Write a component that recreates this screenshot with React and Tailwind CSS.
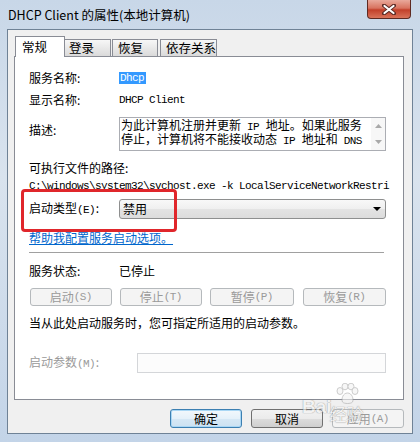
import React from 'react';

const M = ({children, className = ''}) => (
    <span className={`font-['Liberation_Mono',monospace] text-[11px] tracking-[-0.6px] whitespace-pre pr-[0.6px] ${className}`}>{children}</span>
);

const btn = "h-[18px] flex items-center justify-center rounded-[3px] border border-[#b5b9bc] bg-[#f4f4f4] text-[#9a9a9a]";
const push = "w-[72px] h-[19px] flex items-center justify-center rounded-[3px] border";

export default function App() {
    return (
        <div className="w-[420px] h-[442px] overflow-hidden flex flex-col bg-[linear-gradient(180deg,#c8d7e8_0%,#d9e3ee_40%,#c3d4e8_100%)] font-['Noto_Sans_CJK_SC',sans-serif] text-black">
            {/* title bar */}
            <div className="h-[29px] flex items-start shrink-0">
                <div className="pl-[8px] pt-[6px] text-[12.5px] leading-[18px]">DHCP Client 的属性(本地计算机)</div>
                <div className="ml-auto mr-[9px] w-[44px] h-[19px] rounded-b-[4px] border border-t-0 border-[#5e2a22] bg-[linear-gradient(180deg,#e9a99b_0%,#d8735f_45%,#c2402a_55%,#d9735a_100%)] flex items-center justify-center">
                    <svg width="14" height="11" viewBox="0 0 14 11">
                        <path d="M2 1.5 L12 9.5 M12 1.5 L2 9.5" stroke="#5a2a25" strokeWidth="4" strokeLinecap="round" />
                        <path d="M2.5 2 L11.5 9 M11.5 2 L2.5 9" stroke="#ffffff" strokeWidth="2.2" strokeLinecap="round" />
                    </svg>
                </div>
            </div>

            {/* client area */}
            <div className="mx-[7px] h-[405px] border border-[#6f8296] bg-[#f0f0f0] flex flex-col">
                {/* tabs */}
                <div className="flex items-end h-[21px] mt-[6px] ml-[7px] text-[12.5px] leading-[14px]">
                    <div className="relative z-10 w-[50px] h-[21px] bg-white border border-b-0 border-[#898c95] pl-[6px] pt-[3px]">常规</div>
                    <div className="w-[46px] h-[17px] mb-[1px] border border-l-0 border-b-0 border-[#898c95] bg-[linear-gradient(180deg,#f7f7f7,#dadada)] pl-[4px] pt-[1px]">登录</div>
                    <div className="ml-[1px] w-[46px] h-[17px] mb-[1px] border border-b-0 border-[#898c95] bg-[linear-gradient(180deg,#f7f7f7,#dadada)] pl-[5px] pt-[1px]">恢复</div>
                    <div className="ml-[2px] w-[57px] h-[17px] mb-[1px] border border-b-0 border-[#898c95] bg-[linear-gradient(180deg,#f7f7f7,#dadada)] pl-[5px] pt-[1px]">依存关系</div>
                </div>

                {/* panel */}
                <div className="relative -mt-px ml-[6px] w-[390px] h-[344px] border border-[#898c95] bg-white text-[12px] leading-[14px] flex flex-col">
                    <div className="flex items-center h-[14px] mt-[14px] pl-[14px]">
                        <span className="w-[90px]">服务名称:</span>
                        <span className="h-[12px] flex items-center bg-[#3399ff] text-white px-[1px]"><M>Dhcp</M></span>
                    </div>
                    <div className="flex items-center h-[14px] mt-[8px] pl-[14px]">
                        <span className="w-[90px]">显示名称:</span>
                        <M>DHCP Client</M>
                    </div>
                    <div className="flex h-[34px] mt-[10px] pl-[14px]">
                        <span className="w-[90px] pt-[6px]">描述:</span>
                        <div className="w-[267px] h-[34px] border border-[#abadb3] flex">
                            <div className="flex-1 pl-[1px] pt-[1px] leading-[12px] whitespace-nowrap">
                                <div>为此计算机注册并更新<M> IP </M>地址。如果此服务</div>
                                <div>停止，计算机将不能接收动态<M> IP </M>地址和<M> DNS</M></div>
                            </div>
                            <div className="w-[14px] flex flex-col items-center justify-between py-[6px] bg-[#f7f7f7]">
                                <svg width="7" height="4" viewBox="0 0 7 4"><path d="M0 4 L3.5 0 L7 4 Z" fill="#a9a9a9" /></svg>
                                <svg width="7" height="4" viewBox="0 0 7 4"><path d="M0 0 L3.5 4 L7 0 Z" fill="#a9a9a9" /></svg>
                            </div>
                        </div>
                    </div>
                    <div className="h-[14px] mt-[10px] pl-[14px]">可执行文件的路径:</div>
                    <div className="h-[14px] mt-[2px] ml-[14px] whitespace-nowrap">
                        <M>C:\windows\system32\svchost.exe -k LocalServiceNetworkRestri</M>
                    </div>
                    <div className="flex items-center h-[20px] mt-[8px] pl-[14px]">
                        <span className="w-[90px]">启动类型<M>(E)</M>:</span>
                        <div className="w-[267px] h-[20px] rounded-[3px] border border-[#8e8f8f] bg-[linear-gradient(180deg,#f8f8f8_0%,#efefef_50%,#e3e3e3_51%,#dcdcdc_100%)] flex items-center pl-[3px] pr-[4px]">
                            <span>禁用</span>
                            <svg className="ml-auto" width="8" height="4" viewBox="0 0 8 4"><path d="M0 0 L8 0 L4 4 Z" fill="#000" /></svg>
                        </div>
                    </div>
                    <div className="h-[14px] mt-[12px] pl-[14px]">
                        <span className="text-[#0066cc] underline">帮助我配置服务启动选项。</span>
                    </div>
                    <div className="h-px w-[355px] mt-[7px] ml-[14px] bg-[#a0a0a0]" />
                    <div className="flex items-center h-[14px] mt-[11px] pl-[14px]">
                        <span className="w-[90px]">服务状态:</span>
                        <span>已停止</span>
                    </div>
                    <div className="flex h-[18px] mt-[10px] ml-[15px]">
                        <div className={`${btn} w-[82px]`}>启动<M>(S)</M></div>
                        <div className={`${btn} w-[82px] ml-[8px]`}>停止<M>(T)</M></div>
                        <div className={`${btn} w-[84px] ml-[8px]`}>暂停<M>(P)</M></div>
                        <div className={`${btn} w-[83px] ml-[9px]`}>恢复<M>(R)</M></div>
                    </div>
                    <div className="h-[14px] mt-[10px] pl-[14px]">当从此处启动服务时，您可指定所适用的启动参数。</div>
                    <div className="flex items-center h-[20px] mt-[23px] pl-[14px]">
                        <span className="w-[108px] text-[#9a9a9a]">启动参数<M>(M)</M>:</span>
                        <div className="w-[249px] h-[20px] border border-[#d4d6d9] bg-[#fcfcfc]" />
                    </div>

                    {/* red annotation box */}
                    <div className="absolute left-[6px] top-[132px] w-[156px] h-[43px] border-[3px] border-[#e0262b] rounded-[4px]" />
                </div>

                {/* footer buttons */}
                <div className="flex justify-end mt-[9px] mr-[8px] gap-[9px] text-[12px] leading-[14px]">
                    <div className={`${push} border-[#3c7fb1] bg-[linear-gradient(180deg,#f2f8fc_0%,#e5f1fa_50%,#d6e8f5_51%,#cde2f2_100%)] shadow-[inset_0_0_0_1px_#a9d7f5]`}>确定</div>
                    <div className={`${push} border-[#707070] bg-[linear-gradient(180deg,#f2f2f2_0%,#ebebeb_50%,#dddddd_51%,#cfcfcf_100%)]`}>取消</div>
                    <div className={`${push} border-[#b5b9bc] bg-[#f4f4f4] text-[#9a9a9a]`}>应用<M>(A)</M></div>
                </div>
            </div>

            {/* baidu watermark */}
            <div className="pointer-events-none absolute left-[302px] top-[383px] flex items-end opacity-60">
                <span className="text-[19px] font-bold leading-[20px] mb-[6px] text-[#f4f4f4] [text-shadow:0_0_1px_#777,0_0_1px_#777] font-['Liberation_Sans',sans-serif]">Bai</span>
                <div className="flex flex-col items-center -ml-[2px]">
                    <svg width="24" height="22" viewBox="0 0 24 22">
                        <g fill="#f2f2f2" stroke="#999" strokeWidth="0.8">
                            <ellipse cx="5" cy="8" rx="3" ry="3.5" />
                            <ellipse cx="10" cy="3.5" rx="3" ry="3.3" />
                            <ellipse cx="16" cy="3.5" rx="3" ry="3.3" />
                            <ellipse cx="20" cy="8" rx="3" ry="3.5" />
                            <path d="M12.5 10 C8 10 6 16 7.5 19 C9 21 16 21 17.5 19 C19 16 17 10 12.5 10 Z" />
                        </g>
                    </svg>
                    <span className="text-[17px] leading-[18px] text-[#f4f4f4] [text-shadow:0_0_1px_#777,0_0_1px_#777]">经验</span>
                </div>
            </div>
        </div>
    );
}
